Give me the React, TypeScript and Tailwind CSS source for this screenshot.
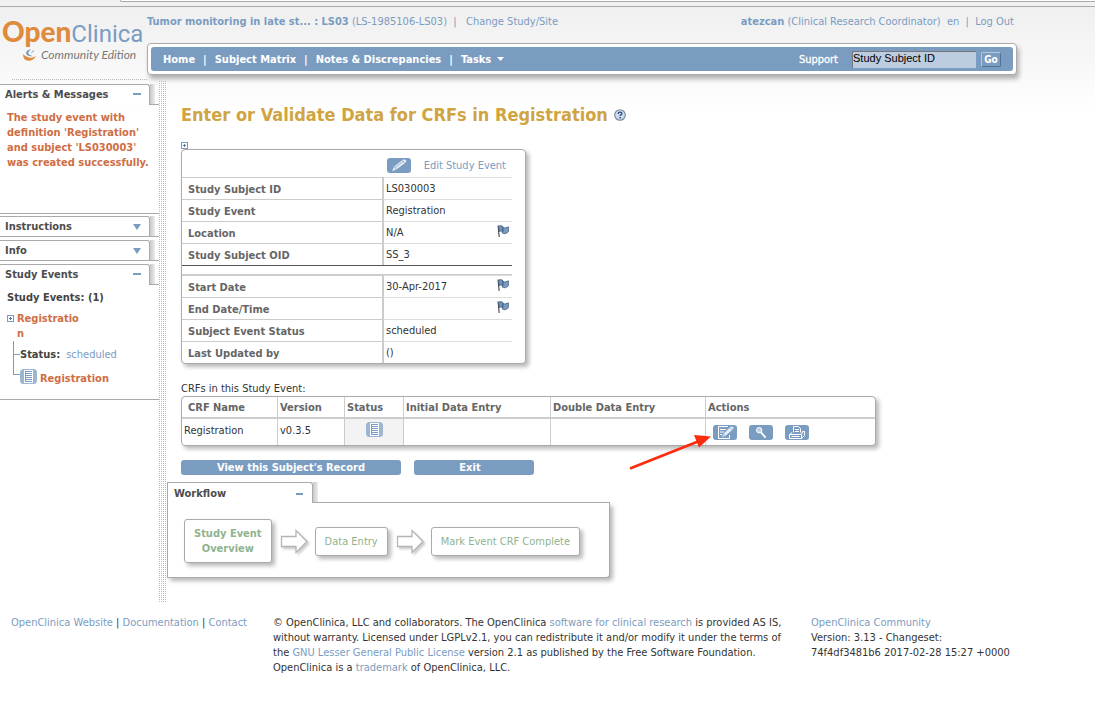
import type { ReactNode } from "react";

const link = "text-[#7b9cc1] hover:underline";
const pageFont = "font-['DejaVu_Sans_Condensed','DejaVu_Sans','Noto_Sans',sans-serif]";
const cardShadow = "shadow-[3px_3px_4px_rgba(0,0,0,0.28)]";

function PlusBox() {
  return (
    <svg width="7" height="7" viewBox="0 0 7 7" shapeRendering="crispEdges" aria-hidden="true">
      <rect x="0.5" y="0.5" width="6" height="6" fill="#fff" stroke="#7b9cc1" />
      <path d="M2 3.5h3M3.5 2v3" stroke="#5a7ca5" />
    </svg>
  );
}

function FlagIcon() {
  return (
    <svg width="12" height="12" viewBox="0 0 12 12" aria-hidden="true">
      <path d="M1 0.5L2.2 12" stroke="#333" strokeWidth="1" fill="none" />
      <path d="M1.5 1.2C3 0.2 4.5 0.6 6 1.6V6.8C4.6 5.8 3.4 5.8 2 6.6Z" fill="#6f93bd" stroke="#35506f" strokeWidth="0.7" />
      <path d="M6 2.6C7.6 3.2 9.6 2.8 11.4 1.8V6.6C9.6 8.8 7.6 9.4 5 7.8L6 6.6Z" fill="#7b9cc1" stroke="#35506f" strokeWidth="0.7" />
    </svg>
  );
}

function SheetIcon() {
  return (
    <svg width="17" height="15" viewBox="0 0 17 15" aria-hidden="true">
      <rect width="17" height="15" rx="3.5" fill="#9cb6d3" />
      <rect x="4.5" y="1.5" width="8" height="12" fill="#7b9cc1" stroke="#fff" strokeWidth="1" />
      <path d="M6 3.5H12M6 5.5H12M6 7.5H12M6 9.5H12M6 11.5H12" stroke="#fff" strokeWidth="1" />
    </svg>
  );
}

function IconTile({ children }: { children: ReactNode }) {
  return (
    <svg width="24" height="15" viewBox="0 0 24 15" aria-hidden="true">
      <rect width="24" height="15" rx="3" fill="#7b9cc1" />
      {children}
    </svg>
  );
}

function PencilTile() {
  return (
    <IconTile>
      <path d="M5 13.2L7.2 8.4L15.8 1.8Q18 0.8 19.2 2.2Q19.6 3.6 18.4 4.8L9.4 11.6Z" fill="#e4ecf5" />
      <path d="M8 9.8L16.6 3.2M7.2 8.4L9.4 11.6M15.2 2.4L17.6 5.2" stroke="#7b9cc1" strokeWidth="0.7" fill="none" />
    </IconTile>
  );
}

function EditTile() {
  return (
    <IconTile>
      <path d="M15 1.5H5.5V13.5H16.5V10" fill="none" stroke="#fff" />
      <path d="M7 4.5H13M7 7H11M7 9.5H9" stroke="#fff" />
      <path d="M8.5 12.5L10.4 8.6L17.6 1.6Q19.4 0.8 20.6 2.2Q21.2 3.4 20 4.6L12.4 11.2Z" fill="#e4ecf5" stroke="#7b9cc1" strokeWidth="0.6" />
      <path d="M10.4 9L12.2 11M17 2.4L19.4 5" stroke="#7b9cc1" strokeWidth="0.7" />
    </IconTile>
  );
}

function MagnifierTile() {
  return (
    <IconTile>
      <circle cx="10.2" cy="5.2" r="2.7" fill="#c5d5e6" stroke="#fff" strokeWidth="1" />
      <path d="M12 7.4L16.6 12.6" stroke="#fff" strokeWidth="1.8" />
      <path d="M9 5.2L10.4 4" stroke="#7b9cc1" strokeWidth="0.8" />
    </IconTile>
  );
}

function PrinterTile() {
  return (
    <IconTile>
      <path d="M8.5 7.5V1.5H13.5L15.5 3.5V7.5" fill="none" stroke="#fff" />
      <path d="M10 4.5H14M10 6.5H14" stroke="#fff" />
      <path d="M7 7.5L4.5 9.5V13.5H16.5L19.5 10.5V6.5H17.5L16.5 9.5H4.5" fill="none" stroke="#fff" />
      <path d="M6.5 11.5H14.5" stroke="#fff" />
      <path d="M16.5 9.5V13.5" stroke="#fff" />
    </IconTile>
  );
}

function HelpIcon() {
  return (
    <svg width="12" height="12" viewBox="0 0 12 12" aria-hidden="true">
      <circle cx="6" cy="6" r="5.3" fill="#cfdceb" stroke="#71879f" strokeWidth="1.1" />
      <path d="M4.2 4.9Q4.2 3.1 6 3.1Q7.9 3.1 7.9 4.6Q7.9 5.4 6.9 5.9Q6.1 6.3 6.1 7.1" fill="none" stroke="#2b4a7d" strokeWidth="1.3" />
      <rect x="5.4" y="8" width="1.5" height="1.4" fill="#2b4a7d" />
    </svg>
  );
}

function FlowArrow() {
  return (
    <svg width="30" height="28" viewBox="0 0 30 28" aria-hidden="true" className="shrink-0 drop-shadow-[2px_2px_1px_rgba(0,0,0,0.2)]">
      <path d="M1.5 9.5H16V3.5L27 14.5L16 25.5V19.5H1.5Z" fill="#fff" stroke="#b4b4b4" strokeWidth="1.3" />
    </svg>
  );
}

function Logo() {
  return (
    <a href="#home" className="flex w-[147px] shrink-0 flex-col pl-[2px] pt-[8px]">
      <span className="flex h-8 items-baseline whitespace-nowrap leading-8">
        <span className="font-['Lato','Open_Sans',sans-serif] text-[28px] font-black text-[#e08a3c]">Open</span>
        <span className="font-['Roboto','Open_Sans',sans-serif] text-[24px] text-[#7b9cc1]">Clinica</span>
      </span>
      <span className="flex items-center gap-1 pl-5 font-['Lato','Open_Sans',sans-serif] text-[12px] italic leading-4 text-[#777]">
        <svg width="15" height="14" viewBox="0 0 15 14" className="shrink-0" aria-hidden="true">
          <path d="M1 6Q1 12.5 6.5 12.8Q11.5 13 14 8Q10.5 10.4 7 9.4Q3 8.6 1 6Z" fill="#e08a3c" />
          <path d="M7.5 1.5Q2.6 3.6 4.6 6.8Q6.6 8.8 10.4 8Q6.6 6.8 6.4 5Q6.4 3.2 9 1.4Z" fill="#7b9cc1" />
          <path d="M9.5 4.5L12 2.6" stroke="#7b9cc1" />
        </svg>
        <span className="whitespace-nowrap">Community Edition</span>
      </span>
    </a>
  );
}

function Header() {
  return (
    <header className="flex">
      <Logo />
      <div className="flex max-w-[870px] flex-1 flex-col">
        <div className="flex h-9 items-center justify-between pb-2 pr-[3px] text-[#7b9cc1]">
          <div className="whitespace-pre">
            <b>Tumor monitoring in late st... : LS03</b> (LS-1985106-LS03){"  |   "}
            <a href="#study" className={link}>Change Study/Site</a>
          </div>
          <div className="whitespace-pre">
            <b>atezcan</b> (Clinical Research Coordinator){"  en  |  "}
            <a href="#logout" className={link}>Log Out</a>
          </div>
        </div>
        <div className="rounded-[4px] border border-[#aaa] bg-white p-[3px] shadow-[2px_4px_5px_rgba(0,0,0,0.3)]">
          <nav className="flex h-6 items-center rounded-[3px] bg-[#7b9cc1] pl-3 pr-3 font-bold text-white">
            <div className="flex items-center gap-2">
              <a href="#home">Home</a>
              <span>|</span>
              <a href="#matrix">Subject Matrix</a>
              <span>|</span>
              <a href="#notes">Notes &amp; Discrepancies</a>
              <span>|</span>
              <button type="button" className="flex items-center gap-[6px] font-bold">
                Tasks
                <svg width="7" height="4" viewBox="0 0 7 4" aria-hidden="true"><path d="M0 0H7L3.5 4Z" fill="#fff" /></svg>
              </button>
            </div>
            <form className="ml-auto flex items-center" onSubmit={(e) => e.preventDefault()}>
              <a href="#support" className="mr-[14px] font-normal [-webkit-text-stroke:0.3px_white]">Support</a>
              <input
                aria-label="Study Subject ID"
                defaultValue="Study Subject ID"
                className="h-[17px] w-[124px] border-l border-t border-[#777] bg-[#bccde1] pb-[3px] font-['Liberation_Sans',Arial,sans-serif] text-[11px] font-normal text-black outline-none"
              />
              <button type="submit" className="ml-[5px] flex h-[15px] w-5 items-center justify-center rounded-[2px] border border-b-[#4f719b] border-l-[#b4c8de] border-r-[#4f719b] border-t-[#b4c8de] text-[10px] font-bold">
                Go
              </button>
            </form>
          </nav>
        </div>
      </div>
    </header>
  );
}

function SideTab({ title, open }: { title: string; open?: boolean }) {
  return (
    <h2 className="flex h-[21px] font-bold text-[#4d4d4d]">
      <button
        type="button"
        aria-expanded={!!open}
        className={
          open
            ? "flex flex-1 items-center justify-between rounded-tr-[3px] border-r border-t border-[#aaa] bg-white pb-[2px] pl-[5px] pr-2 font-bold"
            : "flex flex-1 items-center justify-between rounded-tr-[3px] border-b border-r border-t border-[#aaa] bg-white pl-[5px] pr-2 font-bold"
        }
      >
        {title}
        {open ? (
          <span className="h-[2px] w-2 bg-[#7b9cc1]" />
        ) : (
          <svg width="8" height="6" viewBox="0 0 8 6" aria-hidden="true"><path d="M0 0H8L4 6Z" fill="#7b9cc1" /></svg>
        )}
      </button>
      <span className="flex w-[9px] border-b border-[#aaa]">
        <span className="w-[5px] bg-linear-to-r from-[#c8c8c8] to-[#ececec]" />
      </span>
    </h2>
  );
}

function Sidebar() {
  return (
    <aside className="w-[159px] shrink-0">
      <div className="mb-1 ml-3 mr-3 border-t border-dotted border-[#bbb]" />
      <section className="mb-[2px] h-[130px] border-b border-[#aaa]">
        <SideTab title="Alerts & Messages" open />
        <p className="pl-[7px] pt-[5px] font-bold text-[#cf6e44]">
          The study event with definition 'Registration' and subject 'LS030003' was created successfully.
        </p>
      </section>
      <div className="flex flex-col gap-[3px]">
        <SideTab title="Instructions" />
        <SideTab title="Info" />
        <section className="h-[136px] border-b border-[#aaa]">
          <SideTab title="Study Events" open />
          <p className="pl-[7px] pt-[5px] font-bold text-[#444]">Study Events: (1)</p>
          <div className="flex gap-[3px] pl-[7px] pt-[6px]">
            <span className="pt-1"><PlusBox /></span>
            <a href="#registration" className="w-[62px] break-all font-bold text-[#cf6e44]">Registration</a>
          </div>
          <div className="flex pl-[13px]">
            <svg width="7" height="36" viewBox="0 0 7 36" shapeRendering="crispEdges" className="shrink-0" aria-hidden="true">
              <path d="M0.5 0V33.5H7M0.5 13.5H7" fill="none" stroke="#7b9cc1" />
            </svg>
            <div className="flex flex-col gap-1 pt-[6px]">
              <div className="flex gap-[6px]">
                <b className="text-[#444]">Status:</b>
                <span className="text-[#7b9cc1]">scheduled</span>
              </div>
              <a href="#crf" className="flex items-center gap-[3px] font-bold text-[#cf6e44]">
                <SheetIcon />
                <span className="pt-[5px]">Registration</span>
              </a>
            </div>
          </div>
        </section>
      </div>
    </aside>
  );
}

function DottedDivider() {
  return (
    <div
      aria-hidden="true"
      className="mt-[2px] w-[7px] shrink-0 bg-[conic-gradient(#bdbdbd_25%,transparent_0)] bg-[length:2px_2px] bg-[position:-1px_0]"
    />
  );
}

type Detail = { label: string; value: string; flag?: boolean };

const subjectRows: Detail[] = [
  { label: "Study Subject ID", value: "LS030003" },
  { label: "Study Event", value: "Registration" },
  { label: "Location", value: "N/A", flag: true },
  { label: "Study Subject OID", value: "SS_3" },
];

const eventRows: Detail[] = [
  { label: "Start Date", value: "30-Apr-2017", flag: true },
  { label: "End Date/Time", value: "", flag: true },
  { label: "Subject Event Status", value: "scheduled" },
  { label: "Last Updated by", value: "()" },
];

function DetailRow({ row }: { row: Detail }) {
  return (
    <tr className="h-[22px]">
      <th scope="row" className="w-[202px] border-r-2 border-t border-[#ccc] p-0 pl-[6px] pt-[2px] text-left font-bold text-[#666]">
        {row.label}
      </th>
      <td className="border-t border-[#ddd] p-0 pl-[2px]">
        <div className="flex items-center justify-between pr-[3px]">
          <span>{row.value}</span>
          {row.flag && (
            <button type="button" aria-label={`Discrepancy notes for ${row.label}`} className="pb-[3px]">
              <FlagIcon />
            </button>
          )}
        </div>
      </td>
    </tr>
  );
}

function EventDetails() {
  return (
    <div className={`w-[345px] rounded-[4px] border border-[#aaa] bg-white pr-[13px] ${cardShadow}`}>
      <div className="flex h-[27px] items-center justify-end gap-[13px] pr-[6px] pt-[3px]">
        <PencilTile />
        <a href="#edit" className={link}>Edit Study Event</a>
      </div>
      <table className="w-full border-separate border-spacing-0">
        <tbody>
          {subjectRows.map((row) => <DetailRow key={row.label} row={row} />)}
          <tr className="h-[10px]">
            <td colSpan={2} className="border-b border-t border-b-[#ccc] border-t-[#555] p-0" />
          </tr>
          {eventRows.map((row) => <DetailRow key={row.label} row={row} />)}
        </tbody>
      </table>
    </div>
  );
}

function CrfTable() {
  const head = "h-[22px] border-b-2 border-r border-[#ccc] p-0 pl-[2px] pt-px text-left font-bold text-[#666]";
  const cell = "h-[26px] border-r border-[#ccc] p-0 pl-[2px] pb-1";
  return (
    <div className={`w-[695px] rounded-[4px] border border-[#aaa] bg-white ${cardShadow}`}>
      <table className="w-full table-fixed border-separate border-spacing-0">
        <colgroup>
          <col className="w-[96px]" />
          <col className="w-[67px]" />
          <col className="w-[59px]" />
          <col className="w-[147px]" />
          <col className="w-[155px]" />
          <col />
        </colgroup>
        <thead>
          <tr>
            <th className={head}><span className="pl-1">CRF Name</span></th>
            <th className={head}>Version</th>
            <th className={head}>Status</th>
            <th className={head}>Initial Data Entry</th>
            <th className={head}>Double Data Entry</th>
            <th className="border-b-2 border-[#ccc] p-0 pl-[2px] pt-px text-left font-bold text-[#666]">Actions</th>
          </tr>
        </thead>
        <tbody>
          <tr>
            <td className={cell}>Registration</td>
            <td className={cell}>v0.3.5</td>
            <td className="border-r border-[#ccc] bg-[#f3f3f3] p-0 pb-[5px]">
              <div className="flex justify-center"><SheetIcon /></div>
            </td>
            <td className={cell} />
            <td className={cell} />
            <td className="p-0">
              <div className="flex gap-3 pl-[7px]">
                <button type="button" aria-label="Enter data"><EditTile /></button>
                <button type="button" aria-label="View"><MagnifierTile /></button>
                <button type="button" aria-label="Print"><PrinterTile /></button>
              </div>
            </td>
          </tr>
        </tbody>
      </table>
    </div>
  );
}

function FlowStep({ children }: { children: ReactNode }) {
  return (
    <div className={`whitespace-nowrap rounded-[3px] border border-[#aaa] bg-white px-[9px] py-[6px] text-center text-[#8fb38f] ${cardShadow}`}>
      {children}
    </div>
  );
}

function Workflow() {
  return (
    <section className="w-[443px]">
      <h2 className="flex h-[21px] font-bold text-[#4d4d4d]">
        <button type="button" aria-expanded="true" className="flex w-[146px] items-center justify-between rounded-tr-[3px] border-l border-r border-t border-[#aaa] bg-white pl-[6px] pr-[9px] pt-px font-bold">
          Workflow
          <span className="h-[2px] w-[7px] bg-[#7b9cc1]" />
        </button>
        <span className="flex flex-1 border-b border-[#aaa]">
          <span className="w-[5px] bg-linear-to-r from-[#c8c8c8] to-[#ececec]" />
        </span>
      </h2>
      <div className={`flex h-[75px] items-center rounded-br-[4px] border-x border-b border-[#aaa] bg-white pl-4 pt-[2px] ${cardShadow}`}>
        <FlowStep><b>Study Event<br />Overview</b></FlowStep>
        <span className="w-2" />
        <FlowArrow />
        <span className="w-[5px]" />
        <FlowStep>Data Entry</FlowStep>
        <span className="w-2" />
        <FlowArrow />
        <span className="w-[5px]" />
        <FlowStep>Mark Event CRF Complete</FlowStep>
      </div>
    </section>
  );
}

function Footer() {
  return (
    <footer className="flex pb-9 pl-[11px] pt-[13px]">
      <div className="w-[262px] shrink-0">
        <a href="#site" className={link}>OpenClinica Website</a> | <a href="#docs" className={link}>Documentation</a> | <a href="#contact" className={link}>Contact</a>
      </div>
      <p className="w-[518px] shrink-0">
        © OpenClinica, LLC and collaborators. The OpenClinica <a href="#software" className={link}>software for clinical research</a> is provided AS IS, without warranty. Licensed under LGPLv2.1, you can redistribute it and/or modify it under the terms of the <a href="#license" className={link}>GNU Lesser General Public License</a> version 2.1 as published by the Free Software Foundation. OpenClinica is a <a href="#trademark" className={link}>trademark</a> of OpenClinica, LLC.
      </p>
      <div className="whitespace-nowrap pl-5">
        <a href="#community" className={link}>OpenClinica Community</a>
        <p>Version: 3.13 - Changeset:<br />74f4df3481b6 2017-02-28 15:27 +0000</p>
      </div>
    </footer>
  );
}

export default function App() {
  return (
    <div className={`min-h-screen bg-white bg-linear-to-b from-[#eeeeee] to-white to-[110px] text-[11px] leading-[15px] text-[#333] ${pageFont}`}>
      <div className="flex h-[7px] items-start border-b border-[#aaa] bg-[#f1f1f1]">
        <div className="ml-[120px] h-[2px] flex-1 rounded-bl-[3px] border-b border-l border-[#aaa] bg-white" />
      </div>
      <Header />
      <div className="flex pt-1">
        <Sidebar />
        <DottedDivider />
        <main className="flex-1 pb-6 pt-6">
          <div className="pl-[15px]">
            <h1 className="flex items-center gap-[6px] text-[18px] font-bold leading-6 text-[#cfa441]">
              Enter or Validate Data for CRFs in Registration
              <button type="button" aria-label="Help"><HelpIcon /></button>
            </h1>
            <button type="button" aria-label="Expand" className="mt-[15px] block"><PlusBox /></button>
            <EventDetails />
            <p className="mt-[18px] leading-[14px]">CRFs in this Study Event:</p>
            <CrfTable />
            <div className="mt-[14px] flex gap-[13px] font-bold text-white">
              <button type="button" className="w-[220px] rounded-[3px] bg-[#7b9cc1] font-bold">View this Subject's Record</button>
              <button type="button" className="w-[120px] rounded-[3px] bg-[#7b9cc1] pr-2 font-bold">Exit</button>
            </div>
          </div>
          <div className="ml-px mt-[7px]">
            <Workflow />
          </div>
        </main>
      </div>
      <Footer />
      <svg width="84" height="38" viewBox="0 0 84 38" className="pointer-events-none absolute left-[628px] top-[432px]" aria-hidden="true">
        <path d="M2 36.5L70 9.5" stroke="#fb2b0c" strokeWidth="2.6" />
        <path d="M83 4.5L66 3L71 15.5Z" fill="#fb2b0c" />
      </svg>
    </div>
  );
}
